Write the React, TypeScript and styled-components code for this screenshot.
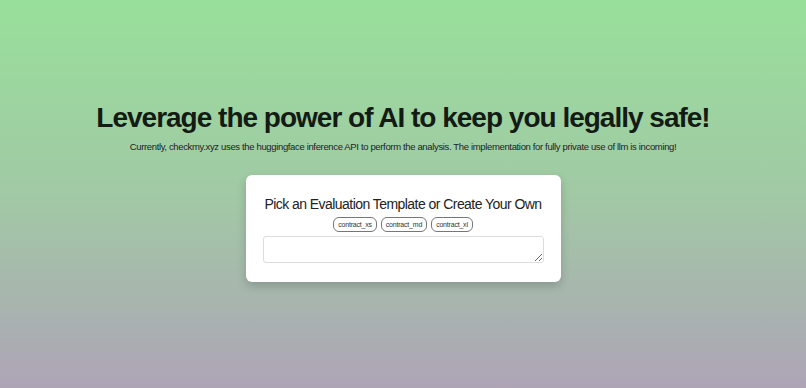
import React from "react"
import styled, { createGlobalStyle } from "styled-components"

const GlobalStyle = createGlobalStyle`
  html, body {
    margin: 0;
    padding: 0;
  }
  body {
    font-family: "Liberation Sans", Arial, sans-serif;
    color: #1a1a1a;
  }
`

const templates = ["contract_xs", "contract_md", "contract_xl"]

export default function App() {
  return (
    <Page>
      <GlobalStyle />
      <Title>Leverage the power of AI to keep you legally safe!</Title>
      <Subtitle>
        Currently, checkmy.xyz uses the huggingface inference API to perform the analysis. The
        implementation for fully private use of llm is incoming!
      </Subtitle>
      <Card>
        <CardTitle>Pick an Evaluation Template or Create Your Own</CardTitle>
        <Chips>
          {templates.map((name) => (
            <Chip key={name}>{name}</Chip>
          ))}
        </Chips>
        <Prompt />
      </Card>
    </Page>
  )
}

const Page = styled.main`
  min-height: 100vh;
  box-sizing: border-box;
  padding-top: 101px;
  display: flex;
  flex-direction: column;
  align-items: center;
  background: linear-gradient(180deg, #98e09a 0%, #a1c9a5 50%, #aea4b6 100%);
`

const Title = styled.h1`
  margin: 0;
  font-size: 28px;
  line-height: 34px;
  font-weight: 700;
  letter-spacing: -1px;
  color: #141a14;
`

const Subtitle = styled.p`
  margin: 6px 0 0;
  font-size: 9.5px;
  line-height: 12px;
  letter-spacing: -0.35px;
  color: #222;
`

const Card = styled.section`
  margin-top: 22px;
  width: 315px;
  box-sizing: border-box;
  padding: 20px 17px 19px;
  background: #fff;
  border-radius: 6px;
  box-shadow: 0 4px 10px rgba(0, 0, 0, 0.18);
  display: flex;
  flex-direction: column;
  align-items: center;
`

const CardTitle = styled.h2`
  margin: 0;
  font-size: 14px;
  line-height: 18px;
  font-weight: 400;
  letter-spacing: -0.55px;
  white-space: nowrap;
  color: #222;
`

const Chips = styled.div`
  margin-top: 4px;
  display: flex;
  gap: 4px;
`

const Chip = styled.button`
  font-family: "Liberation Sans", Arial, sans-serif;
  font-size: 7px;
  line-height: 9px;
  letter-spacing: -0.2px;
  padding: 2px 4px;
  border: 1px solid #777;
  border-radius: 6px;
  background: #fff;
  color: #333;
`

const Prompt = styled.textarea`
  margin-top: 4px;
  width: 100%;
  height: 27px;
  box-sizing: border-box;
  border: 1px solid #ddd;
  border-radius: 3px;
  resize: vertical;
  font-family: inherit;
`
